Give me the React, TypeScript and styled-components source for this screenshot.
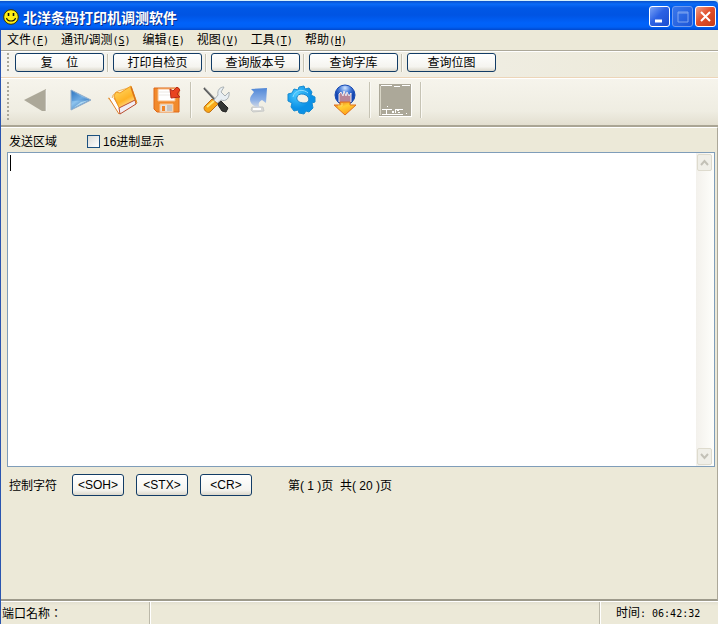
import React, { useState } from "react";
import styled, { createGlobalStyle } from "styled-components";

const cjk = '"Noto Sans CJK SC"';

const GlobalStyle = createGlobalStyle`
  *, *::before, *::after { box-sizing: border-box; }
  body {
    margin: 0;
    background: #ece9d8;
    color: #000;
    font: 12px/16px "Liberation Sans", ${cjk}, sans-serif;
  }
  button, textarea, input { font: inherit; color: inherit; }
`;

const Window = styled.div`
  display: flex;
  flex-direction: column;
  min-height: 100vh;
  border-left: 1px solid #2a55b0;
  background: #ece9d8;
`;

const TitleBar = styled.header`
  display: flex;
  align-items: center;
  gap: 4px;
  height: 30px;
  margin-left: -1px;
  padding: 2px 2px 0 3px;
  border-top: 1px solid #d5f0fa;
  border-top-right-radius: 4px;
  background: linear-gradient(#0a50c8 0, #0a6cf8 3px, #0058e6 7px, #0054e3 14px, #0062fa 22px, #0060f5 26px, #0040c0 30px);
`;

const Title = styled.h1`
  flex: 1;
  margin: 0;
  color: #fff;
  font: 700 14px/18px ${cjk}, sans-serif;
  text-shadow: 1px 1px #0a2f8c;
`;

const WindowButtons = styled.div`
  display: flex;
  gap: 2px;
`;

const WindowButton = styled.button<{ $tone: "blue" | "dim" | "red" }>`
  display: grid;
  place-items: center;
  width: 21px;
  height: 21px;
  padding: 0;
  border: 1px solid ${(p) => (p.$tone === "dim" ? "#6f9bee" : "#fff")};
  border-radius: 3px;
  background: ${(p) =>
    p.$tone === "red"
      ? "linear-gradient(135deg, #f0a088, #e2502c 45%, #c53c18)"
      : p.$tone === "dim"
      ? "linear-gradient(135deg, #3a78ec, #1c56d8)"
      : "linear-gradient(135deg, #7ba4f6, #2c62e4 45%, #1c4ed0)"};
`;

const MenuBar = styled.nav`
  display: flex;
  height: 21px;
  border-bottom: 1px solid #aca899;
`;

const MenuItem = styled.button`
  height: 20px;
  padding: 0 6px;
  border: 0;
  background: none;
  line-height: 20px;
  white-space: nowrap;
`;

const Mono = styled.span`
  font: 10px/16px "DejaVu Sans Mono", monospace;
`;

const Bar = styled.div<{ $tall?: boolean }>`
  display: flex;
  align-items: flex-start;
  height: ${(p) => (p.$tall ? "49px" : "27px")};
  padding: ${(p) => (p.$tall ? "3px 0 0 6px" : "1px 0 0 6px")};
  border-top: 1px solid #fff;
  border-bottom: ${(p) => (p.$tall ? "2px solid #aaa594" : "1px solid #edd5b8")};
  background: ${(p) =>
    p.$tall
      ? "linear-gradient(#f6f4ec, #efede2 70%, #e3dfd0)"
      : "linear-gradient(90deg, #f5f4ef, #f0eee4 60%, #ece9d8)"};
`;

const Grip = styled.span<{ $tall?: boolean }>`
  flex: none;
  width: 2px;
  height: ${(p) => (p.$tall ? "40px" : "18px")};
  background: repeating-linear-gradient(#aaa89b 0 2px, transparent 2px 4px);
`;

const Divider = styled.span<{ $tall?: boolean }>`
  flex: none;
  width: 2px;
  height: ${(p) => (p.$tall ? "36px" : "18px")};
  border-left: 1px solid #c6c3b4;
  background: #faf9f4;
`;

const Commands = styled.div`
  display: flex;
  align-items: center;
  gap: 4px;
  margin-left: 6px;
`;

const XpButton = styled.button<{ $wide?: boolean }>`
  width: ${(p) => (p.$wide ? "89px" : "52px")};
  height: ${(p) => (p.$wide ? "19px" : "22px")};
  margin-right: ${(p) => (p.$wide ? "-1px" : "0")};
  padding: 0;
  border: 1px solid #123c66;
  border-radius: 3px;
  background: linear-gradient(#fff, #f5f4ef 75%, #dcd8cc);
  line-height: 18px;
  white-space: pre;
`;

const Tools = styled.div`
  display: flex;
`;

const ToolGroup = styled.div<{ $first?: boolean }>`
  display: flex;
  padding: ${(p) => (p.$first ? "0 1px 0 4px" : "0 3px 0 2px")};
`;

const Tool = styled.button<{ $snug?: boolean }>`
  display: grid;
  place-items: center;
  width: ${(p) => (p.$snug ? "43px" : "44px")};
  height: 36px;
  padding: 0;
  border: 0;
  background: none;
  svg { display: block; }
`;

const Main = styled.main`
  display: flex;
  flex: 1;
  flex-direction: column;
  padding: 0 2px 0 6px;
  border-top: 1px solid #fff;
  border-right: 1px solid #aca899;
  border-bottom: 2px solid #9d9a8b;
`;

const SendHeader = styled.div`
  display: flex;
  align-items: center;
  gap: 30px;
  height: 24px;
  padding: 3px 0 0 2px;
`;

const CheckLabel = styled.label`
  display: flex;
  align-items: center;
  gap: 3px;
`;

const Check = styled.input`
  appearance: none;
  width: 13px;
  height: 13px;
  margin: 0;
  border: 1px solid #1c5180;
  background: linear-gradient(135deg, #dcdcd7, #fff);
  &:checked { background: #21a121; }
`;

const Editor = styled.div`
  display: flex;
  flex: 1;
  border: 1px solid #7f9db9;
  background: #fff;
`;

const TextBox = styled.textarea`
  flex: 1;
  min-width: 0;
  padding: 2px;
  border: 0;
  outline: 0;
  resize: none;
  background: linear-gradient(#000, #000) 2px 2px / 1px 16px no-repeat;
  &:focus { background: none; }
`;

const ScrollRail = styled.div`
  display: flex;
  flex-direction: column;
  justify-content: space-between;
  width: 18px;
  padding: 1px;
  background: linear-gradient(90deg, #f3f1ec, #fefefb);
`;

const ScrollButton = styled.button`
  display: grid;
  place-items: center;
  width: 15px;
  height: 17px;
  padding: 0;
  border: 1px solid #dedbce;
  border-radius: 2px;
  background: #f0efe8;
`;

const Controls = styled.section`
  display: flex;
  align-items: flex-start;
  gap: 12px;
  height: 132px;
  padding: 7px 0 0 2px;
  line-height: 24px;
`;

const ControlName = styled.span`
  margin-right: 3px;
`;

const Pages = styled.span`
  margin-left: 24px;
  white-space: pre;
`;

const StatusBar = styled.footer`
  display: flex;
  height: 23px;
  border-top: 1px solid #fff;
  background: linear-gradient(#e2dfd0, #ece9d8 4px);
  line-height: 22px;
`;

const StatusCell = styled.div<{ $size?: "port" | "time" }>`
  flex: ${(p) => (p.$size ? "none" : "1")};
  width: ${(p) => (p.$size === "port" ? "148px" : p.$size === "time" ? "119px" : "auto")};
  padding-left: ${(p) => (p.$size === "time" ? "16px" : "1px")};
  border-left: ${(p) => (p.$size === "port" ? "0" : "1px solid #bbb8a9")};
  box-shadow: ${(p) => (p.$size === "port" ? "none" : "inset 1px 0 #fff")};
`;

const PortLabel = styled.span`
  font-family: "Noto Sans CJK TC", sans-serif;
`;

const Smiley = () => (
  <svg width="16" height="16" viewBox="0 0 16 16" aria-hidden="true">
    <circle cx="8" cy="8" r="7.3" fill="#ffef18" stroke="#343000" />
    <path d="M5.5 4v3M10.5 4v3" stroke="#111" strokeWidth="1.6" />
    <path d="M3.5 9c1 4 8 4 9 0" fill="none" stroke="#111" strokeWidth="1.1" />
  </svg>
);

const Back = () => (
  <svg width="24" height="24" viewBox="0 0 24 24">
    <path d="M1 12 23 1v22h-4z" fill="#aca899" />
    <path d="M23 2v21" stroke="#fff" opacity=".6" />
  </svg>
);

const Forward = () => (
  <svg width="26" height="24" viewBox="-3 0 26 24">
    <defs>
      <linearGradient id="play" x1="0" y1="0" x2=".7" y2="1">
        <stop offset="0" stopColor="#2d73bd" />
        <stop offset=".5" stopColor="#8ec4ef" />
        <stop offset="1" stopColor="#2867ac" />
      </linearGradient>
    </defs>
    <path d="M2 2 22 12 2 22z" fill="url(#play)" stroke="#92aecb" />
    <path d="M3 4 20 12 3 13z" fill="#2670c4" opacity=".3" />
    <path d="m4 20 8-6 8-2z" fill="#d5f4ff" opacity=".65" />
  </svg>
);

const Folder = () => (
  <svg width="32" height="32" viewBox="0 0 32 32">
    <defs>
      <linearGradient id="folder" x1="0" y1="0" x2=".5" y2="1">
        <stop stopColor="#ffe070" /><stop offset=".6" stopColor="#ffb326" /><stop offset="1" stopColor="#fff4cf" />
      </linearGradient>
    </defs>
    <path d="m1 14 4 1 1-4 5-4 10-3-11 20z" fill="#fff0cb" stroke="#ecb76b" />
    <path d="m2 14 10 16 3-2-8-14" fill="#fff" stroke="#df8128" />
    <path d="m7 12 2-4 4 1L24 2l6 17-16 9z" fill="url(#folder)" stroke="#ef9a24" />
    <path d="m12 24 16-8 1 4-16 10z" fill="#f1edf4" stroke="#b94e31" />
    <path d="m24 3 5 15" stroke="#d8731c" strokeWidth="1.5" />
  </svg>
);

const Save = () => (
  <svg width="30" height="30" viewBox="0 0 30 30">
    <path d="M2 3h25v24H5l-3-3z" fill="#f18a2c" stroke="#df6919" />
    <path d="M6 4h17v12H6z" fill="#fff" stroke="#f7ba85" />
    <path d="M7 7h14M7 10h14" stroke="#ebe8e4" />
    <path d="M8 19h13v8H8z" fill="#e5e2de" stroke="#fac28e" />
    <path d="M10 21h3v5h-3z" fill="#f18528" />
    <path d="M15 20h5v6h-5z" fill="#c6c4c2" />
    <path d="m18 4 1 9 9-1-3-3 3-4-3-3-4 4z" fill="#e9431f" stroke="#b62b17" />
  </svg>
);

const Wrench = () => (
  <svg width="30" height="30" viewBox="0 0 30 30">
    <path d="m3 3 14 15" stroke="#57595a" strokeWidth="2" />
    <path d="m4 3 13 14" stroke="#ddd" strokeWidth=".5" />
    <path d="m15 17 3-3 9 9-2 4-4-1z" fill="#343634" stroke="#222" />
    <path d="m12 16 5-6c-1-5 2-8 6-8l-3 5 4 4 4-4c1 6-3 10-8 8l-7 6z" fill="#e8eef2" stroke="#a9b0b4" />
    <path d="m11 14 6 5-8 8c-3 2-8-3-5-6z" fill="#f9a817" stroke="#be6e12" />
    <path d="m6 22 7-6" stroke="#ffe675" strokeWidth="2" />
  </svg>
);

const Turn = () => (
  <svg width="24" height="30" viewBox="0 0 24 30">
    <defs>
      <linearGradient id="turn" x1="0" y1="0" x2="0" y2="1">
        <stop stopColor="#5187d6" /><stop offset=".6" stopColor="#8cb0e6" /><stop offset="1" stopColor="#d7dce4" />
      </linearGradient>
    </defs>
    <path d="M5 22h11l1 4-11 1-2-2z" fill="#d9d9d6" stroke="#c8cac9" />
    <path d="M6 24h8" stroke="#fff" strokeWidth="2" />
    <path d="m4 4 16-1-1 15-4-3c-4 2-4 5-2 8-8-1-12-7-9-12l3-4z" fill="url(#turn)" />
  </svg>
);

const Gear = () => (
  <svg width="30" height="30" viewBox="0 0 30 30">
    <defs><radialGradient id="gear" cx=".35" cy=".3"><stop stopColor="#4bcaff" /><stop offset="1" stopColor="#0b91e6" /></radialGradient></defs>
    <path d="m7 4 4 1 1-3 5-1 1 3 4-1 3 4-1 3 4 2v5l-3 1 1 5-4 4-3-1-2 3-5-1-1-3-4 1-3-4 1-4-4-2V9l4-1z" fill="url(#gear)" stroke="#178bd1" />
    <path d="M6 12c2-8 11-8 15-4" fill="none" stroke="#8adbff" />
    <path d="M10 12c1-4 8-4 11 0 2 3 0 6-4 6-5 0-8-3-7-6z" fill="#f1f0e8" stroke="#1583cc" />
  </svg>
);

const Download = () => (
  <svg width="26" height="34" viewBox="0 0 26 34">
    <defs>
      <radialGradient id="globe" cx=".5" cy=".15"><stop stopColor="#d2e5ff" /><stop offset=".5" stopColor="#5586dd" /><stop offset="1" stopColor="#1647b2" /></radialGradient>
      <linearGradient id="arrow" x1="0" y1="0" x2=".6" y2="1"><stop stopColor="#e96c20" /><stop offset=".45" stopColor="#ffcf33" /><stop offset="1" stopColor="#ff9d18" /></linearGradient>
    </defs>
    <circle cx="13" cy="12" r="10" fill="url(#globe)" stroke="#174ab3" />
    <path d="M7 19v-8l2-2 2 4 1-5 2 5 1-4 2 4 2-3v9" fill="#b98698" stroke="#efebee" />
    <path d="M8 19h10v3h6L13 32 2 22h6z" fill="url(#arrow)" stroke="#df701f" />
    <path d="M10 20v3H6" fill="none" stroke="#ffdf6b" />
  </svg>
);

const Bitmap = () => (
  <svg width="33" height="33" viewBox="0 0 33 33" shapeRendering="crispEdges">
    <path d="M0 0h32v32H0z" fill="#aca899" />
    <path d="M2 1h11m2 1h6m2-1h8M3 25h10m3 0h8M3 30h21M32 0v33M0 32h32M7 26v4m6-3h2m0 1h-2m3-2v3m2-3h2m-1 2h2M8 22h1M27 29h1" fill="none" stroke="#fff" />
    <path d="M1 2v29" fill="none" stroke="#d8d5c6" />
  </svg>
);

const Chevron = ({ down = false }: { down?: boolean }) => (
  <svg width="9" height="7" viewBox="0 0 9 7" aria-hidden="true">
    <path d={down ? "m1 1 3.5 4L8 1" : "M1 6l3.5-4L8 6"} fill="none" stroke="#c3c1b7" strokeWidth="2" />
  </svg>
);

const menus = [["文件", "F"], ["通讯/调测", "S"], ["编辑", "E"], ["视图", "V"], ["工具", "T"], ["帮助", "H"]];
const commands = ["复    位", "打印自检页", "查询版本号", "查询字库", "查询位图"];

export default function App() {
  const [text, setText] = useState("");
  const [hex, setHex] = useState(false);
  return (
    <>
      <GlobalStyle />
      <Window>
        <TitleBar>
          <Smiley />
          <Title>北洋条码打印机调测软件</Title>
          <WindowButtons>
            <WindowButton $tone="blue" aria-label="最小化">
              <svg width="17" height="17"><path d="M4 13h7" stroke="#fff" strokeWidth="3" /></svg>
            </WindowButton>
            <WindowButton $tone="dim" aria-label="最大化" disabled>
              <svg width="17" height="17"><path d="M4 4h10v10H4zM4 5h10" fill="none" stroke="#80a6ef" /></svg>
            </WindowButton>
            <WindowButton $tone="red" aria-label="关闭">
              <svg width="17" height="17"><path d="m4 4 9 9m0-9-9 9" stroke="#fff" strokeWidth="2" /></svg>
            </WindowButton>
          </WindowButtons>
        </TitleBar>
        <MenuBar>
          {menus.map(([name, key]) => (
            <MenuItem key={key}>{name}<Mono>(<u>{key}</u>)</Mono></MenuItem>
          ))}
        </MenuBar>
        <Bar>
          <Grip />
          <Commands>
            {commands.map((name, i) => (
              <React.Fragment key={name}>
                {i > 0 && <Divider />}
                <XpButton $wide>{name}</XpButton>
              </React.Fragment>
            ))}
          </Commands>
        </Bar>
        <Bar $tall>
          <Grip $tall />
          <Tools>
            <ToolGroup $first>
              <Tool aria-label="后退" disabled><Back /></Tool>
              <Tool aria-label="前进"><Forward /></Tool>
              <Tool aria-label="打开"><Folder /></Tool>
              <Tool aria-label="保存"><Save /></Tool>
            </ToolGroup>
            <Divider $tall />
            <ToolGroup>
              <Tool $snug aria-label="设置"><Wrench /></Tool>
              <Tool $snug aria-label="发送"><Turn /></Tool>
              <Tool $snug aria-label="选项"><Gear /></Tool>
              <Tool $snug aria-label="下载"><Download /></Tool>
            </ToolGroup>
            <Divider $tall />
            <ToolGroup>
              <Tool aria-label="位图" disabled><Bitmap /></Tool>
            </ToolGroup>
            <Divider $tall />
          </Tools>
        </Bar>
        <Main>
          <SendHeader>
            <label htmlFor="send">发送区域</label>
            <CheckLabel>
              <Check type="checkbox" checked={hex} onChange={(e) => setHex(e.target.checked)} />
              16进制显示
            </CheckLabel>
          </SendHeader>
          <Editor>
            <TextBox id="send" value={text} onChange={(e) => setText(e.target.value)} />
            <ScrollRail>
              <ScrollButton aria-label="向上滚动" disabled><Chevron /></ScrollButton>
              <ScrollButton aria-label="向下滚动" disabled><Chevron down /></ScrollButton>
            </ScrollRail>
          </Editor>
          <Controls>
            <ControlName>控制字符</ControlName>
            <XpButton>&lt;SOH&gt;</XpButton>
            <XpButton>&lt;STX&gt;</XpButton>
            <XpButton>&lt;CR&gt;</XpButton>
            <Pages>第( 1 )页  共( 20 )页</Pages>
          </Controls>
        </Main>
        <StatusBar>
          <StatusCell $size="port"><PortLabel lang="zh-TW">端口名称：</PortLabel></StatusCell>
          <StatusCell />
          <StatusCell $size="time">时间<Mono>: 06:42:32</Mono></StatusCell>
        </StatusBar>
      </Window>
    </>
  );
}
